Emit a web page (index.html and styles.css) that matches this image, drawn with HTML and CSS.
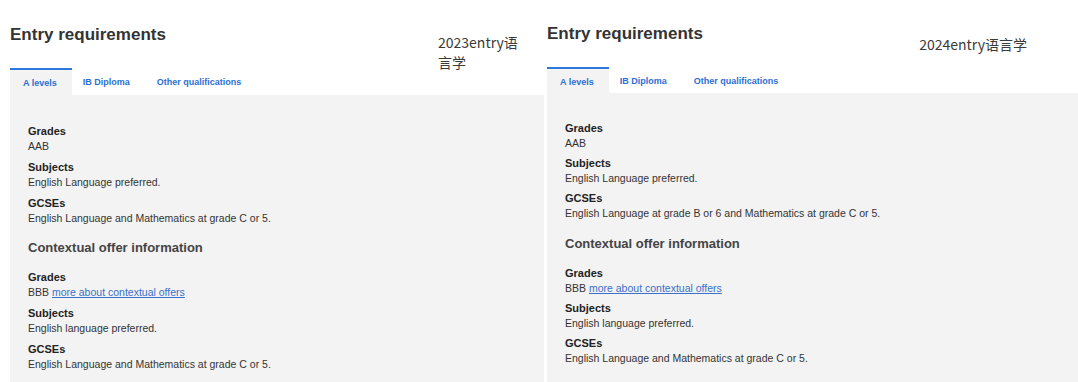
FILE: index.html
```html
<!DOCTYPE html>
<html>
<head>
<meta charset="utf-8">
<link rel="stylesheet" href="styles.css">
</head>
<body>
<div class="page">
  <section class="panel panel-left">
    <div class="head">
      <h2 class="title">Entry requirements</h2>
      <div class="note note-left">2023entry语言学</div>
    </div>
    <div class="tabs">
      <span class="tab active">A levels</span>
      <span class="tab">IB Diploma</span>
      <span class="tab">Other qualifications</span>
    </div>
    <div class="body">
      <dl class="req">
        <dt>Grades</dt><dd>AAB</dd>
        <dt>Subjects</dt><dd>English Language preferred.</dd>
        <dt>GCSEs</dt><dd>English Language and Mathematics at grade C or 5.</dd>
      </dl>
      <h3 class="sub">Contextual offer information</h3>
      <dl class="req">
        <dt>Grades</dt><dd>BBB <a href="#">more about contextual offers</a></dd>
        <dt>Subjects</dt><dd>English language preferred.</dd>
        <dt>GCSEs</dt><dd>English Language and Mathematics at grade C or 5.</dd>
      </dl>
    </div>
  </section>
  <section class="panel panel-right">
    <div class="head">
      <h2 class="title">Entry requirements</h2>
      <div class="note note-right">2024entry语言学</div>
    </div>
    <div class="tabs">
      <span class="tab active">A levels</span>
      <span class="tab">IB Diploma</span>
      <span class="tab">Other qualifications</span>
    </div>
    <div class="body">
      <dl class="req">
        <dt>Grades</dt><dd>AAB</dd>
        <dt>Subjects</dt><dd>English Language preferred.</dd>
        <dt>GCSEs</dt><dd>English Language at grade B or 6 and Mathematics at grade C or 5.</dd>
      </dl>
      <h3 class="sub">Contextual offer information</h3>
      <dl class="req">
        <dt>Grades</dt><dd>BBB <a href="#">more about contextual offers</a></dd>
        <dt>Subjects</dt><dd>English language preferred.</dd>
        <dt>GCSEs</dt><dd>English Language and Mathematics at grade C or 5.</dd>
      </dl>
    </div>
  </section>
</div>
</body>
</html>
```

FILE: styles.css
```css
* { box-sizing: border-box; }
html, body { margin: 0; padding: 0; background: #fff; }
body {
  font-family: "Liberation Sans", Arial, sans-serif;
  color: #333;
  width: 1078px;
  height: 382px;
  overflow: hidden;
}
.page {
  display: flex;
  gap: 3px;
  height: 382px;
}
.panel {
  display: flex;
  flex-direction: column;
  padding-left: 10px;
}
.panel-left { width: 544px; }
.panel-right { flex: 1; padding-left: 0; }

.head {
  display: flex;
  align-items: flex-start;
  justify-content: space-between;
  height: 68px;
}
.panel-right .head { height: 67px; }
.title {
  margin: 0;
  padding-top: 24px;
  font-size: 17px;
  line-height: 22px;
  font-weight: bold;
  color: #333;
}
.panel-right .title { padding-top: 23px; }

.note {
  font-family: "Noto Sans CJK SC", "Noto Sans", sans-serif;
  font-size: 14px;
  line-height: 20px;
  color: #3a3a3a;
}
.note-left {
  width: 90px;
  margin-top: 32px;
  margin-right: 16px;
}
.note-right {
  margin-top: 34px;
  margin-right: 51px;
}

.tabs {
  display: flex;
  height: 27px;
}
.panel-right .tabs { height: 26px; }
.tab {
  font-size: 9px;
  font-weight: bold;
  color: #2c6fd3;
  padding: 7px 16px 0 11px;
  border-top: 2px solid transparent;
}
.tab.active {
  background: #f3f3f3;
  border-top-color: #2d77dd;
  padding: 8px 15px 0 13px;
}

.body {
  flex: 1;
  background: #f3f3f3;
  padding: 28px 18px 0 18px;
}
.panel-right .body { padding-top: 27px; }

.req { margin: 0; }
.req dt {
  font-size: 11px;
  font-weight: bold;
  line-height: 16px;
  color: #222;
}
.req dd {
  margin: 0 0 5px 0;
  font-size: 10.5px;
  line-height: 15px;
  color: #333;
}
.panel-right .req dd { margin-bottom: 4px; }
.req dd a { color: #3a70c9; }

.sub {
  margin: 13px 0 12px 0;
  font-size: 13px;
  line-height: 18px;
  font-weight: bold;
  color: #444;
}
.panel-right .sub { margin-top: 14px; }
```
